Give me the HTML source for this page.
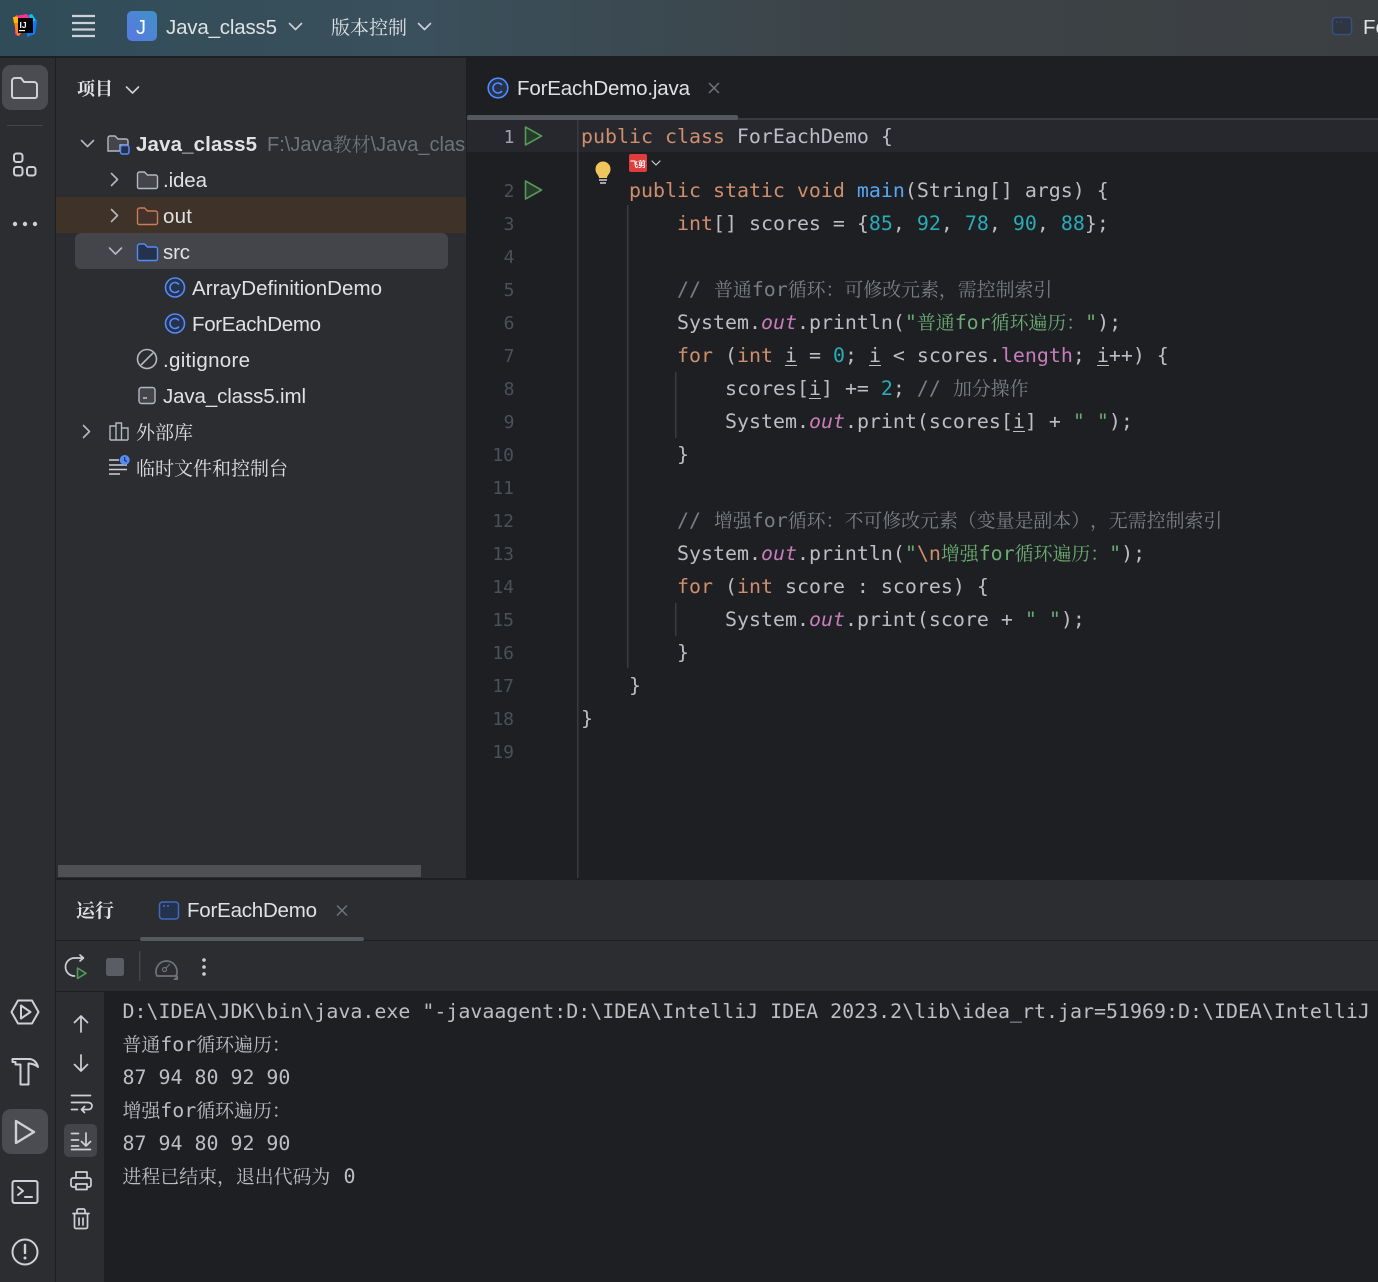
<!DOCTYPE html>
<html lang="zh"><head><meta charset="utf-8"><title>ForEachDemo</title>
<style>
html,body{margin:0;padding:0;background:#1e1f22;overflow:hidden}
svg{display:block}
text{white-space:pre;text-spacing-trim:space-all}
.m{font-family:"DejaVu Sans Mono","Noto Serif CJK SC",monospace;font-size:19.93px;fill:#bcbec4}
.u{font-family:"Liberation Sans","Noto Serif CJK SC",sans-serif;font-size:20.5px;fill:#dfe1e5}
.z{font-family:"Noto Serif CJK SC",serif;font-size:18.9px}
.zu{font-family:"Noto Serif CJK SC",serif;font-size:19px;fill:#dfe1e5}
.k{fill:#cf8e6d}.n{fill:#2aacb8}.s{fill:#6aab73}.c{fill:#7a7e85}.f{fill:#56a8f5}.p{fill:#c77dbb}.o{fill:#c77dbb;font-style:italic}
.ln{font-family:"DejaVu Sans Mono",monospace;font-size:18px;fill:#4b5059;text-anchor:end}
.i{fill:none;stroke:#ced0d6;stroke-width:2;stroke-linecap:round;stroke-linejoin:round}
</style></head><body>
<svg xmlns="http://www.w3.org/2000/svg" width="1378" height="1282" viewBox="0 0 1378 1282">
<defs>
<linearGradient id="tb" x1="0" x2="1" y1="0" y2="0"><stop offset="0" stop-color="#2f4c58"/><stop offset=".3" stop-color="#3a505c"/><stop offset=".62" stop-color="#3c4347"/><stop offset="1" stop-color="#3c3f42"/></linearGradient>
<linearGradient id="jb" x1="0" x2="1" y1="1" y2="0"><stop offset="0" stop-color="#5a78e6"/><stop offset="1" stop-color="#3f92c4"/></linearGradient>
<clipPath id="tc"><rect x="56" y="120" width="410" height="400"/></clipPath>
</defs>
<rect width="1378" height="1282" fill="#1e1f22"/>
<!-- Title bar -->
<rect width="1378" height="56" fill="url(#tb)"/>
<path d="M27 16l4-2 6 7-2 13-8 3z" fill="#087cfa"/><path d="M29 15l3-1 4 6-4 3z" fill="#07c3f2"/>
<path d="M15 16l12-2 4 6-12 16-4-2z" fill="#ff318c"/><path d="M13 18l4-3 3 20-3 1z" fill="#fc801d"/><path d="M13 17h5v6h-4z" fill="#fdb60d"/>
<rect x="18" y="18" width="15" height="15" fill="#000"/>
<text x="19.5" y="28" font-family="Liberation Sans" font-weight="700" font-size="8.5" fill="#fff">IJ</text>
<rect x="19" y="30" width="6" height="1.2" fill="#fff"/>
<path d="M72 16h23M72 23h23M72 29.500h23M72 36h23" stroke="#ced0d6" stroke-width="2.200" fill="none"/>
<rect x="127" y="11" width="30" height="30" rx="5" fill="url(#jb)"/>
<text x="136" y="34" font-family="Liberation Sans" font-size="20" fill="#fff">J</text>
<text x="166" y="34" class="u" textLength="111">Java_class5</text>
<path class="i" style="stroke-width:1.600" d="M289.500 23.500l6 6 6-6"/>
<text x="331" y="34" class="zu">版本控制</text>
<path class="i" style="stroke-width:1.600" d="M418.500 23.500l6 6 6-6"/>
<rect x="1332.500" y="17.500" width="19" height="17" rx="3" fill="#2e3543" stroke="#3b4f7d" stroke-width="1.500"/>
<path d="M1336 22h2M1340 22h2" stroke="#3b4f7d"/>
<text x="1363" y="34" class="u">Fo</text>
<!-- Structure -->
<rect y="56" width="1378" height="2" fill="#1e1f22"/>
<rect y="58" width="56" height="1224" fill="#2b2d30"/>
<rect x="55" y="58" width="1" height="1224" fill="#1e1f22"/>
<rect x="56" y="58" width="410" height="820" fill="#2b2d30"/>
<rect x="466" y="58" width="1" height="820" fill="#1e1f22"/>
<!-- Left bar -->
<rect x="2" y="65" width="46" height="45" rx="9" fill="#4a4c52"/>
<path class="i" d="M12 95V81a3 3 0 0 1 3-3h6l3 4h10a3 3 0 0 1 3 3v11a2 2 0 0 1-2 2H14a2 2 0 0 1-2-2z"/>
<rect x="7" y="125" width="36" height="1" fill="#43454a"/>
<rect class="i" x="14" y="153.500" width="8.500" height="8.500" rx="2.500"/><rect class="i" x="14" y="167" width="8.500" height="8.500" rx="2.500"/><rect class="i" x="27" y="167" width="8.500" height="8.500" rx="2.500"/>
<circle cx="15" cy="224" r="2.200" fill="#ced0d6"/><circle cx="25" cy="224" r="2.200" fill="#ced0d6"/><circle cx="35" cy="224" r="2.200" fill="#ced0d6"/>
<path class="i" d="M11.500 1012l6.500-11.500h14l6.500 11.500-6.500 11.500H18z"/><path class="i" d="M21 1005.500l9.500 6.500-9.500 6.500z"/>
<path class="i" d="M12.500 1059H29c5 0 8 4 9 8-3-2.500-6-3.500-9.500-3.500V1084.500H20.500V1064.500H15.500V1062H12.500z"/>
<rect x="2" y="1109" width="46" height="45" rx="9" fill="#4a4c52"/>
<path class="i" style="stroke-width:2.400" d="M16 1121v22l18-11z"/>
<rect class="i" x="12.500" y="1181" width="25" height="22" rx="2"/><path class="i" d="M18 1187l5 4-5 4M25 1197h7"/>
<circle class="i" cx="25" cy="1252" r="12.500"/><path d="M25 1245v8" stroke="#ced0d6" stroke-width="2.400" stroke-linecap="round"/><circle cx="25" cy="1258" r="1.500" fill="#ced0d6"/>
<!-- Project tree -->
<text x="77" y="95" class="zu" style="font-size:18px;font-weight:700">项目</text>
<path class="i" style="stroke-width:1.600" d="M126.500 87l6 6 6-6"/>
<rect x="56" y="197" width="410" height="36" fill="#3f3228"/>
<rect x="75" y="233" width="373" height="36" rx="6" fill="#43454a"/>
<g clip-path="url(#tc)">
<path class="i" style="stroke-width:1.600;stroke:#b4b8bf" d="M81.500 140.500l6 6 6-6"/>
<path d="M108 151v-13a2 2 0 0 1 2-2h5l3 3h8a2 2 0 0 1 2 2v4h-8v6z" fill="#43454a" stroke="#b4b8bf" stroke-width="1.400"/>
<rect x="120.500" y="145.500" width="8.500" height="8.500" rx="2" fill="#25324d" stroke="#548af7" stroke-width="1.500"/>
<text x="136" y="151" class="u" textLength="121" style="font-weight:700">Java_class5</text>
<text x="267" y="151" class="u" style="fill:#6f737a;font-size:20px">F:\Java<tspan class="z" style="fill:#6f737a;font-size:19px">教材</tspan>\Java_class5</text>
<path class="i" style="stroke-width:1.600;stroke:#b4b8bf" d="M111.500 173.500l6 6-6 6"/>
<path d="M137.500 187v-13a2 2 0 0 1 2-2h5l3 3h8a2 2 0 0 1 2 2v10a1.500 1.500 0 0 1-1.500 1.500h-17a1.500 1.500 0 0 1-1.500-1.500z" fill="#43454a" stroke="#b4b8bf" stroke-width="1.400"/>
<text x="163" y="187" class="u" textLength="44">.idea</text>
<path class="i" style="stroke-width:1.600;stroke:#b4b8bf" d="M111.500 209.500l6 6-6 6"/>
<path d="M137.500 223v-13a2 2 0 0 1 2-2h5l3 3h8a2 2 0 0 1 2 2v10a1.500 1.500 0 0 1-1.500 1.500h-17a1.500 1.500 0 0 1-1.500-1.500z" fill="#45322a" stroke="#c77d55" stroke-width="1.400"/>
<text x="163" y="223" class="u" textLength="29">out</text>
<path class="i" style="stroke-width:1.600;stroke:#b4b8bf" d="M109.500 248l6 6 6-6"/>
<path d="M137.500 259v-13a2 2 0 0 1 2-2h5l3 3h8a2 2 0 0 1 2 2v10a1.500 1.500 0 0 1-1.500 1.500h-17a1.500 1.500 0 0 1-1.500-1.500z" fill="#25324d" stroke="#548af7" stroke-width="1.400"/>
<text x="163" y="259" class="u" textLength="27">src</text>
<g fill="none" stroke="#548af7" stroke-width="1.600">
<circle cx="175" cy="287.500" r="9.500" fill="#25324d"/><path d="M179 284.500a5 5 0 1 0 0 6"/>
<circle cx="175" cy="323.500" r="9.500" fill="#25324d"/><path d="M179 320.500a5 5 0 1 0 0 6"/>
</g>
<text x="192" y="295" class="u" textLength="190">ArrayDefinitionDemo</text>
<text x="192" y="331" class="u" textLength="129">ForEachDemo</text>
<circle cx="147" cy="359" r="9.500" fill="none" stroke="#b4b8bf" stroke-width="1.600"/><path d="M141 365l12-12" stroke="#b4b8bf" stroke-width="1.600"/>
<text x="163" y="367" class="u" textLength="87">.gitignore</text>
<rect x="139" y="387.500" width="16" height="16" rx="2.500" fill="#43454a" stroke="#b4b8bf" stroke-width="1.400"/><path d="M143 398h4" stroke="#ced0d6" stroke-width="1.400"/>
<text x="163" y="403" class="u" textLength="143">Java_class5.iml</text>
<path class="i" style="stroke-width:1.600;stroke:#b4b8bf" d="M83.500 425.500l6 6-6 6"/>
<path d="M110 440v-14h6v14M116 440v-17h5.500v17M121.500 440v-12h6.500v12M110 440h18" fill="none" stroke="#b4b8bf" stroke-width="1.400"/>
<text x="136" y="439" class="zu">外部库</text>
<path d="M109 460h10M109 465h18M109 469.500h18M109 474h11" stroke="#ced0d6" stroke-width="1.500" fill="none"/>
<circle cx="124.700" cy="460" r="5" fill="#548af7"/><path d="M124.700 457v3.500l2 1" stroke="#1e1f22" stroke-width="1" fill="none"/>
<text x="136" y="475" class="zu">临时文件和控制台</text>
</g>
<rect x="58" y="865" width="363" height="12" fill="#4e5053"/>
<!-- Editor tabs -->
<g fill="none" stroke="#548af7" stroke-width="1.600"><circle cx="498" cy="88" r="9.800" fill="#25324d"/><path d="M502 85a5 5 0 1 0 0 6"/></g>
<text x="517" y="95" class="u" textLength="173">ForEachDemo.java</text>
<path d="M709 83l10 10M719 83l-10 10" stroke="#6f737a" stroke-width="1.500"/>
<rect x="467" y="118" width="911" height="2" fill="#393b40"/>
<rect x="467" y="115" width="271" height="5" rx="2" fill="#55585e"/>
<!-- Editor -->
<rect x="467" y="120" width="911" height="32" fill="#26282e"/>
<rect x="577" y="120" width="1.500" height="758" fill="#393b40"/>
<rect x="627" y="205" width="1.500" height="463" fill="#393b40"/>
<rect x="675" y="372" width="1.500" height="66" fill="#393b40"/>
<rect x="675" y="603" width="1.500" height="33" fill="#393b40"/>
<text x="514.500" y="143" class="ln" style="fill:#a1a3ab">1</text><text x="514.500" y="197" class="ln">2</text><text x="514.500" y="230" class="ln">3</text><text x="514.500" y="263" class="ln">4</text><text x="514.500" y="296" class="ln">5</text><text x="514.500" y="329" class="ln">6</text><text x="514.500" y="362" class="ln">7</text><text x="514.500" y="395" class="ln">8</text><text x="514.500" y="428" class="ln">9</text><text x="514" y="461" class="ln">10</text><text x="514" y="494" class="ln">11</text><text x="514" y="527" class="ln">12</text><text x="514" y="560" class="ln">13</text><text x="514" y="593" class="ln">14</text><text x="514" y="626" class="ln">15</text><text x="514" y="659" class="ln">16</text><text x="514" y="692" class="ln">17</text><text x="514" y="725" class="ln">18</text><text x="514" y="758" class="ln">19</text>
<path d="M525.500 127v18l16-9z" fill="#253c2a" stroke="#57965c" stroke-width="1.600" stroke-linejoin="round"/>
<path d="M525.500 181v18l16-9z" fill="#253c2a" stroke="#57965c" stroke-width="1.600" stroke-linejoin="round"/>
<path d="M599 178c0-3-3.500-4-3.500-9a7.500 7.500 0 0 1 15 0c0 5-3.500 6-3.500 9z" fill="#f2c55c"/><path d="M599 180h8M600 183h6" stroke="#ced0d6" stroke-width="1.500"/>
<rect x="629" y="154" width="18" height="18" rx="2" fill="#e03c3c"/>
<text x="630" y="167" font-family="Noto Sans CJK SC" font-weight="700" font-size="8" fill="#fff">飞剪</text>
<path class="i" style="stroke-width:1.200" d="M652 161l4 4 4-4"/>

<text x="581" y="143" class="m" xml:space="preserve"><tspan class="k">public class </tspan>ForEachDemo {</text>
<text x="629" y="197" class="m" xml:space="preserve"><tspan class="k">public static void </tspan><tspan class="f">main</tspan>(String[] args) {</text>
<text x="677" y="230" class="m" xml:space="preserve"><tspan class="k">int</tspan>[] scores = {<tspan class="n">85</tspan>, <tspan class="n">92</tspan>, <tspan class="n">78</tspan>, <tspan class="n">90</tspan>, <tspan class="n">88</tspan>};</text>
<text x="677" y="296" class="m" xml:space="preserve"><tspan class="c">// </tspan></text><text x="714" y="296" class="m"><tspan class="c z">普通</tspan><tspan class="c">for</tspan><tspan class="c z">循环：可修改元素，需控制索引</tspan></text>
<text x="677" y="329" class="m" xml:space="preserve">System.<tspan class="o">out</tspan>.println(<tspan class="s">"</tspan><tspan class="s z">普通</tspan><tspan class="s">for</tspan><tspan class="s z">循环遍历：</tspan><tspan class="s">"</tspan>);</text>
<text x="677" y="362" class="m" xml:space="preserve"><tspan class="k">for</tspan> (<tspan class="k">int</tspan> i = <tspan class="n">0</tspan>; i &lt; scores.<tspan class="p">length</tspan>; i++) {</text>
<path d="M785 365.500h12M869 365.500h12M1097 365.500h12M809 398.500h12M1013 431.500h12" stroke="#bcbec4" stroke-width="1"/>
<text x="725" y="395" class="m" xml:space="preserve">scores[i] += <tspan class="n">2</tspan>; <tspan class="c">// </tspan></text><text x="953" y="395" class="m"><tspan class="c z">加分操作</tspan></text>
<text x="725" y="428" class="m" xml:space="preserve">System.<tspan class="o">out</tspan>.print(scores[i] + <tspan class="s">" "</tspan>);</text>
<text x="677" y="461" class="m">}</text>
<text x="677" y="527" class="m" xml:space="preserve"><tspan class="c">// </tspan></text><text x="714" y="527" class="m"><tspan class="c z">增强</tspan><tspan class="c">for</tspan><tspan class="c z">循环：不可修改元素（变量是副本），无需控制索引</tspan></text>
<text x="677" y="560" class="m" xml:space="preserve">System.<tspan class="o">out</tspan>.println(<tspan class="s">"</tspan><tspan class="k">\n</tspan><tspan class="s z">增强</tspan><tspan class="s">for</tspan><tspan class="s z">循环遍历：</tspan><tspan class="s">"</tspan>);</text>
<text x="677" y="593" class="m" xml:space="preserve"><tspan class="k">for</tspan> (<tspan class="k">int</tspan> score : scores) {</text>
<text x="725" y="626" class="m" xml:space="preserve">System.<tspan class="o">out</tspan>.print(score + <tspan class="s">" "</tspan>);</text>
<text x="677" y="659" class="m">}</text>
<text x="629" y="692" class="m">}</text>
<text x="581" y="725" class="m">}</text>
<!-- Bottom panel -->
<rect x="56" y="878" width="1322" height="2" fill="#1e1f22"/>
<rect x="56" y="880" width="1322" height="112" fill="#2b2d30"/>
<rect x="56" y="940" width="1322" height="1" fill="#1e1f22"/>
<text x="76" y="917" class="zu" style="font-weight:700">运行</text>
<rect x="159.500" y="902" width="19" height="17" rx="3" fill="#25324d" stroke="#3f6bbd" stroke-width="1.500"/><path d="M163 906h2M167 906h2" stroke="#548af7"/>
<text x="187" y="917" class="u" textLength="130">ForEachDemo</text>
<path d="M337 905.500l10 10M347 905.500l-10 10" stroke="#6f737a" stroke-width="1.500"/>
<rect x="140" y="937" width="224" height="4" rx="2" fill="#55585e"/>
<path class="i" style="stroke-width:1.700" d="M74.500 976a9 9 0 0 1 0-18h8.500M80 955l3.500 3-3.500 3"/>
<path d="M77.500 968v10.500l8.500-5.200z" fill="#253c2a" stroke="#57965c" stroke-width="1.600" stroke-linejoin="round"/>
<rect x="106" y="958" width="18" height="18" rx="2.500" fill="#5a5d63"/>
<rect x="139" y="951" width="1.500" height="30" fill="#43454a"/>
<path d="M157 976a10.500 10.500 0 1 1 19 0z" fill="none" stroke="#6f737a" stroke-width="1.700" stroke-linejoin="round"/>
<circle cx="164.500" cy="969.500" r="2" fill="none" stroke="#6f737a" stroke-width="1.200"/><path d="M166 968l4-4" stroke="#6f737a" stroke-width="1.200"/><path d="M178 975v5h-5z" fill="#6f737a"/>
<circle cx="204" cy="960" r="1.800" fill="#ced0d6"/><circle cx="204" cy="967" r="1.800" fill="#ced0d6"/><circle cx="204" cy="974" r="1.800" fill="#ced0d6"/>
<rect x="56" y="991" width="1322" height="1.500" fill="#1e1f22"/>
<rect x="56" y="992" width="48" height="290" fill="#2b2d30"/>
<path class="i" style="stroke-width:1.700" d="M81 1016v16M74.500 1022.500l6.500-6.500 6.500 6.500M81 1055v16M74.500 1064.500l6.500 6.500 6.500-6.500"/>
<path class="i" style="stroke-width:1.700" d="M71.500 1095.500h19M71.500 1102.500h17a3.500 3.500 0 0 1 0 7h-6M84.500 1106.500l-3 3 3 3M71.500 1109.500h6"/>
<rect x="64" y="1124" width="33" height="33" rx="5" fill="#43454a"/>
<path class="i" style="stroke-width:1.700" d="M71.500 1133.500h7M71.500 1140h7M71.500 1146h7M71.500 1149.500h19M86 1133v13M81.500 1141.500l4.500 4.500 4.500-4.500"/>
<path class="i" style="stroke-width:1.700" d="M76 1178v-6h11v6M75 1187h-2a2 2 0 0 1-2-2v-5a2 2 0 0 1 2-2h16a2 2 0 0 1 2 2v5a2 2 0 0 1-2 2h-2M76 1184h11v5.500H76z"/>
<path class="i" style="stroke-width:1.700" d="M73 1213.500h16M77 1213v-2.500a1.500 1.500 0 0 1 1.500-1.500h5a1.500 1.500 0 0 1 1.500 1.500v2.500M74.500 1214v13a1.500 1.500 0 0 0 1.500 1.500h10a1.500 1.500 0 0 0 1.500-1.500v-13M79 1218v7M83 1218v7"/>
<text x="122.500" y="1018" class="m">D:\IDEA\JDK\bin\java.exe "-javaagent:D:\IDEA\IntelliJ IDEA 2023.2\lib\idea_rt.jar=51969:D:\IDEA\IntelliJ IDEA</text>
<text x="122.500" y="1051" class="m"><tspan class="z">普通</tspan>for<tspan class="z">循环遍历：</tspan></text>
<text x="122.500" y="1084" class="m">87 94 80 92 90</text>
<text x="122.500" y="1117" class="m"><tspan class="z">增强</tspan>for<tspan class="z">循环遍历：</tspan></text>
<text x="122.500" y="1150" class="m">87 94 80 92 90</text>
<text x="122.500" y="1183" class="m"><tspan class="z">进程已结束，退出代码为</tspan></text>
<text x="343.500" y="1183" class="m">0</text>
</svg>
</body></html>
